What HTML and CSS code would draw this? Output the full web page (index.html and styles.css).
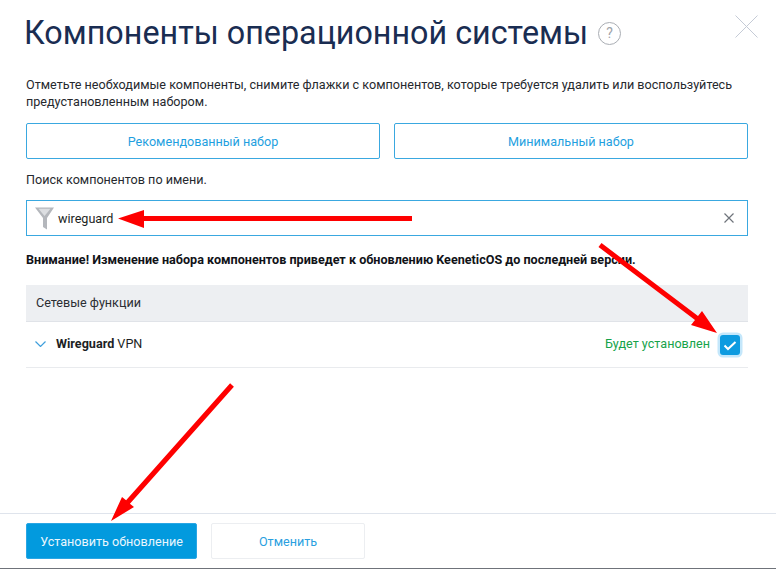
FILE: index.html
```html
<!DOCTYPE html>
<html lang="ru">
<head>
<meta charset="utf-8">
<title>Компоненты операционной системы</title>
<link rel="stylesheet" href="styles.css">
</head>
<body>
<div class="dialog">
  <main class="content">
    <header class="head">
      <h1 class="title">Компоненты операционной системы</h1>
      <span class="help">?</span>
      <svg class="close" width="23" height="23" viewBox="0 0 23 23"><path d="M0.5 0.5L22.500 22.500M22.500 0.5L0.5 22.500" stroke="#c5cbd6" stroke-width="1" fill="none"/></svg>
    </header>
    <p class="intro">Отметьте необходимые компоненты, снимите флажки с компонентов, которые требуется удалить или воспользуйтесь предустановленным набором.</p>
    <div class="presets">
      <button class="preset">Рекомендованный набор</button>
      <button class="preset">Минимальный набор</button>
    </div>
    <p class="search-label">Поиск компонентов по имени.</p>
    <div class="search">
      <svg class="funnel" width="19" height="23" viewBox="0 0 19 23"><path d="M0 0.5H19L12 11V22.5L8 20V11Z" fill="#b4b7bc"/><path d="M3.5 1.8H15.5L9.5 9Z" fill="#dcdee1"/></svg>
      <span class="query">wireguard</span>
      <svg class="clear" width="10" height="10" viewBox="0 0 10 10"><path d="M0.5 0.5L9.5 9.5M9.5 0.5L0.5 9.5" stroke="#6f747b" stroke-width="1.2" fill="none"/></svg>
    </div>
    <p class="warning">Внимание! Изменение набора компонентов приведет к обновлению KeeneticOS до последней версии.</p>
    <div class="group">Сетевые функции</div>
    <div class="row">
      <svg class="chev" width="11" height="6" viewBox="0 0 11 6"><path d="M0.5 0.5L5.5 5.5L10.5 0.5" stroke="#3f9fdc" stroke-width="1.2" fill="none"/></svg>
      <span class="name"><b>Wireguard</b> VPN</span>
      <span class="status">Будет установлен</span>
      <span class="check"><svg width="14" height="11" viewBox="0 0 14 11"><path d="M1.5 5.5L5 9L12.500 2" stroke="#fff" stroke-width="2" fill="none"/></svg></span>
    </div>
  </main>
  <footer class="foot">
    <button class="primary">Установить обновление</button>
    <button class="cancel">Отменить</button>
  </footer>
</div>
<svg class="arrows" width="776" height="569" viewBox="0 0 776 569">
  <g fill="#fe0000" stroke="none">
    <path d="M412 216V221H144V228L118 218.500L144 210V216Z"/>
    <path d="M601.500 243L698 316L702 311L717 333L691 325L695 320L598.500 247Z"/>
    <path d="M230.100 383.300L126.100 500.300L122 497L111 521L134 507L129.900 503.700L233.900 386.700Z"/>
  </g>
</svg>
</body>
</html>
```

FILE: styles.css
```css
* { box-sizing: border-box; }
html, body { margin: 0; height: 100%; }
body {
  position: relative;
  background: #fff;
  font-family: Roboto, "Liberation Sans", sans-serif;
  color: #1c1f24;
  overflow: hidden;
}
button { font-family: inherit; cursor: pointer; }
.dialog {
  height: 569px;
  display: flex;
  flex-direction: column;
  border-bottom: 1px solid #6f737a;
}
.content { flex: 1; padding: 13px 28px 0 26px; }
.head { display: flex; align-items: center; height: 40px; }
.title {
  margin: 0 0 0 -2px;
  font-size: 32.3px;
  line-height: 40px;
  font-weight: 400;
  color: #1a2d52;
}
.help {
  width: 23px;
  height: 23px;
  margin-left: 10px;
  border: 1.5px solid #a9adb3;
  border-radius: 50%;
  display: flex;
  align-items: center;
  justify-content: center;
  font-size: 14px;
  color: #a0a4aa;
}
.close { margin-left: auto; margin-right: -10px; margin-top: -13px; }
.intro {
  margin: 23px 0 0;
  font-size: 12.6px;
  line-height: 17px;
  color: #26292e;
}
.presets { display: flex; gap: 14px; margin-top: 13px; }
.preset {
  flex: 1;
  height: 36px;
  padding: 0;
  background: #fff;
  border: 1px solid #3aa8e0;
  border-radius: 2px;
  font-size: 12.6px;
  color: #1f9fe0;
}
.search-label {
  margin: 12px 0 0;
  font-size: 12.6px;
  line-height: 17px;
  color: #26292e;
}
.search {
  display: flex;
  align-items: center;
  height: 36px;
  margin-top: 12px;
  padding: 0 13px 0 8px;
  border: 1px solid #3aa8e0;
}
.query { margin-left: 4px; font-size: 12.6px; color: #1c1f24; }
.clear { margin-left: auto; }
.warning {
  margin: 15px 0 0;
  font-size: 12.6px;
  line-height: 17px;
  font-weight: 700;
  color: #111318;
}
.group {
  display: flex;
  align-items: center;
  height: 37px;
  margin-top: 17px;
  padding: 0 0 2px 10px;
  background: #edeff2;
  border-bottom: 1px solid #e0e3e8;
  font-size: 12.6px;
  color: #2b2e33;
}
.row {
  display: flex;
  align-items: center;
  height: 46px;
  padding: 0 8px 2px 9px;
  border-bottom: 1px solid #e9ebee;
}
.name { margin-left: 10px; font-size: 12.6px; color: #1c1f24; }
.name b { font-weight: 700; }
.status { margin-left: auto; font-size: 12.6px; color: #16a34a; }
.check {
  width: 20px;
  height: 20px;
  margin-left: 10px;
  margin-top: 3px;
  background: #0d9be0;
  border-radius: 3px;
  box-shadow: 0 0 0 2.5px #c4e7fb;
  display: flex;
  align-items: center;
  justify-content: center;
}
.foot {
  display: flex;
  gap: 14px;
  height: 55px;
  padding: 9px 26px 0;
  border-top: 1px solid #dfe4ec;
}
.primary, .cancel { height: 36px; font-size: 12.6px; border-radius: 2px; padding: 0; }
.primary {
  width: 171px;
  background: #029ade;
  border: 1px solid #2aa6e4;
  color: #eaf6fd;
}
.cancel {
  width: 154px;
  background: #fff;
  border: 1px solid #eceef1;
  color: #2a9fdf;
}
.arrows { position: absolute; left: 0; top: 0; pointer-events: none; }
```
